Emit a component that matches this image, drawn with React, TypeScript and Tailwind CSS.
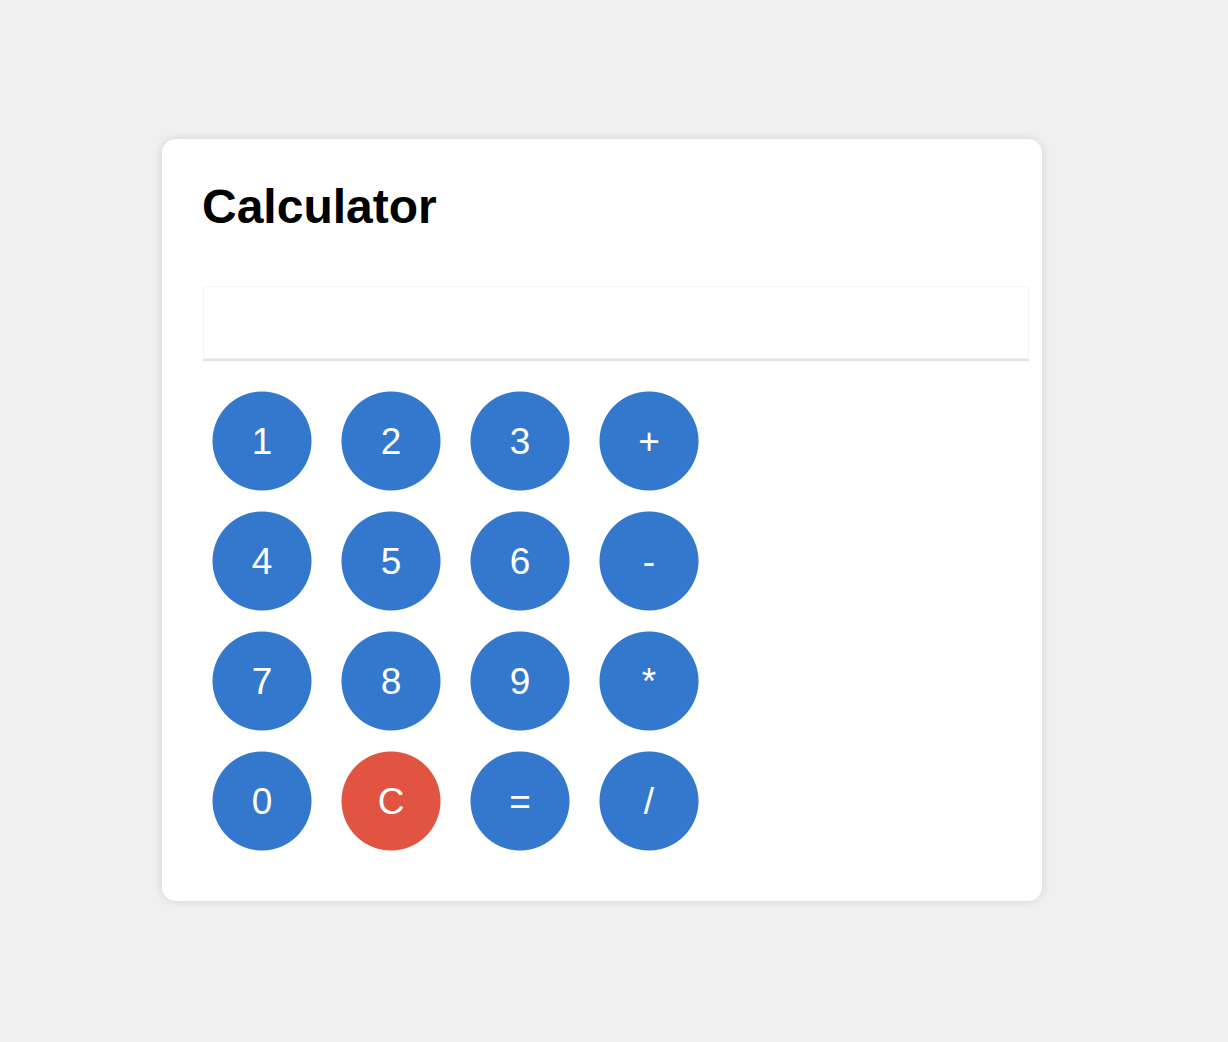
import React, { useState } from 'react';

const KEYS = ['1', '2', '3', '+', '4', '5', '6', '-', '7', '8', '9', '*', '0', 'C', '=', '/'];

export default function App() {
  const [display, setDisplay] = useState('');

  const press = (k: string) => {
    if (k === 'C') return setDisplay('');
    if (k === '=') {
      try {
        // eslint-disable-next-line no-new-func
        setDisplay(String(Function(`return (${display})`)()));
      } catch (e) {
        setDisplay('Error');
      }
      return;
    }
    setDisplay(display + k);
  };

  return (
    <div className="min-h-screen bg-[#f0f0f0] pt-[139px] pl-[162px] pb-[141px] font-['Liberation_Sans',Arial,sans-serif]">
      <div className="w-[880px] rounded-[14px] bg-white px-10 pt-10 pb-[50px] shadow-[0_0_10px_rgba(0,0,0,0.12)]">
        <h1 className="mb-[51px] text-[48px] font-bold leading-[56px] text-black">Calculator</h1>
        <input
          readOnly
          value={display}
          className="ml-px block h-[73px] w-[826px] border border-[#f4f4f4] bg-white px-3 text-right text-[32px] text-black shadow-[0_2px_0_#e4e4e4] outline-none"
        />
        {/* circles drawn with radial gradients: smoother edges than border-radius here */}
        <div className="mt-[32px] ml-[10px] grid grid-cols-[repeat(4,100px)] gap-x-[29px] gap-y-[20px]">
          {KEYS.map(k => (
            <button
              key={k}
              onClick={() => press(k)}
              className={`flex h-[100px] w-[100px] items-center justify-center text-[37px] leading-none text-white ${
                k === 'C'
                  ? 'bg-[radial-gradient(circle_closest-side,#e05441_calc(100%-1px),transparent_100%)]'
                  : 'bg-[radial-gradient(circle_closest-side,#3478cd_calc(100%-1px),transparent_100%)]'
              }`}
            >
              {k}
            </button>
          ))}
        </div>
      </div>
    </div>
  );
}
